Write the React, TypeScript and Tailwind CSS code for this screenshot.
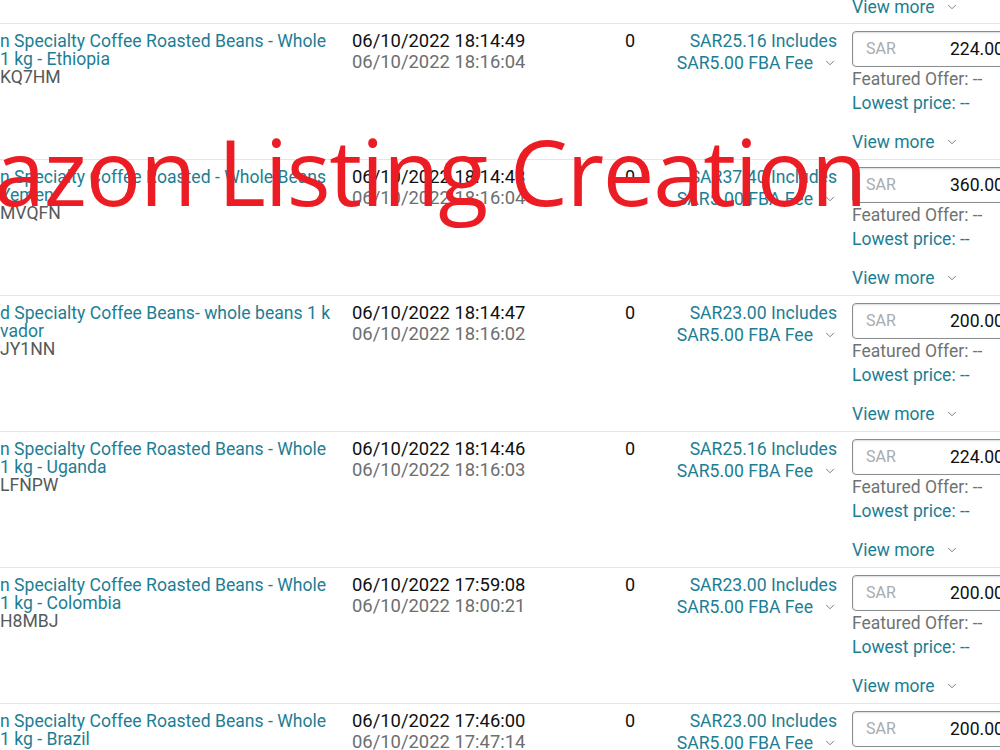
import { ChevronDown } from 'lucide-react'

type Listing = {
  title: string
  variant: string
  sku: string
  created: string
  updated: string
  fee: string
  price: string
}

const listings: Listing[] = [
  {
    title: 'n Specialty Coffee Roasted Beans - Whole',
    variant: '1 kg - Ethiopia',
    sku: 'KQ7HM',
    created: '06/10/2022 18:14:49',
    updated: '06/10/2022 18:16:04',
    fee: 'SAR25.16',
    price: '224.00',
  },
  {
    title: 'n Specialty Coffee Roasted - Whole Beans',
    variant: 'Yemen',
    sku: 'MVQFN',
    created: '06/10/2022 18:14:48',
    updated: '06/10/2022 18:16:04',
    fee: 'SAR37.40',
    price: '360.00',
  },
  {
    title: 'd Specialty Coffee Beans- whole beans 1 k',
    variant: 'vador',
    sku: 'JY1NN',
    created: '06/10/2022 18:14:47',
    updated: '06/10/2022 18:16:02',
    fee: 'SAR23.00',
    price: '200.00',
  },
  {
    title: 'n Specialty Coffee Roasted Beans - Whole',
    variant: '1 kg - Uganda',
    sku: 'LFNPW',
    created: '06/10/2022 18:14:46',
    updated: '06/10/2022 18:16:03',
    fee: 'SAR25.16',
    price: '224.00',
  },
  {
    title: 'n Specialty Coffee Roasted Beans - Whole',
    variant: '1 kg - Colombia',
    sku: 'H8MBJ',
    created: '06/10/2022 17:59:08',
    updated: '06/10/2022 18:00:21',
    fee: 'SAR23.00',
    price: '200.00',
  },
  {
    title: 'n Specialty Coffee Roasted Beans - Whole',
    variant: '1 kg - Brazil',
    sku: 'K2WLD',
    created: '06/10/2022 17:46:00',
    updated: '06/10/2022 17:47:14',
    fee: 'SAR23.00',
    price: '200.00',
  },
]

function Chevron() {
  return <ChevronDown className="ml-[10px] inline h-[14px] w-[14px] text-[#6f7373]" strokeWidth={1.6} />
}

function ViewMore() {
  return (
    <div className="flex h-[24px] items-center text-[17.5px] leading-[24px] text-[#1d7e93]">
      View more
      <Chevron />
    </div>
  )
}

function ListingRow({ item }: { item: Listing }) {
  return (
    <div className="flex h-[136px] shrink-0 border-t border-[#e3e6e6]">
      <div className="w-[352px] shrink-0 pt-[8px] text-[17.6px] leading-[18px]">
        <p className="whitespace-nowrap text-[#1d7e93]">{item.title}</p>
        <p className="text-[#1d7e93]">{item.variant}</p>
        <p className="text-[#565959]">{item.sku}</p>
      </div>

      <div className="w-[268px] shrink-0 pt-[6px] text-[18.4px] leading-[21px]">
        <p className="text-[#0f1111]">{item.created}</p>
        <p className="text-[#6b6f70]">{item.updated}</p>
      </div>

      <div className="w-[20px] shrink-0 pl-[5px] pt-[6px] text-[18px] leading-[21px] text-[#0f1111]">0</div>

      <div className="w-[197px] shrink-0 pt-[6px] text-right text-[17.6px] leading-[22px] text-[#1d7e93]">
        <p>{item.fee} Includes</p>
        <p className="flex items-center justify-end">
          SAR5.00 FBA Fee
          <Chevron />
        </p>
      </div>

      <div className="ml-[15px] w-[166px] shrink-0 pt-[7px]">
        <div className="flex h-[36px] items-center justify-between rounded-[4px] border border-[#888c8c] px-[13px] shadow-[inset_0_1px_2px_rgba(15,17,17,0.15)]">
          <span className="text-[16px] text-[#a9acac]">SAR</span>
          <span className="text-[17.6px] text-[#0f1111]">{item.price}</span>
        </div>
        <p className="text-[17.5px] leading-[24px] text-[#6f7373]">Featured Offer: --</p>
        <p className="text-[17.5px] leading-[24px] text-[#1d7e93]">Lowest price: --</p>
        <div className="mt-[15px]">
          <ViewMore />
        </div>
      </div>
    </div>
  )
}

export default function App() {
  return (
    <div className="relative h-[750px] w-[1000px] overflow-hidden bg-white font-['Roboto',sans-serif]">
      <div className="flex h-[23px] shrink-0 overflow-hidden pl-[852px]">
        <div className="-mt-[5px]">
          <ViewMore />
        </div>
      </div>

      {listings.map((item) => (
        <ListingRow key={item.sku} item={item} />
      ))}

      <div className="pointer-events-none absolute left-[-147px] top-[125px] whitespace-nowrap font-['Open_Sans',sans-serif] text-[92px] leading-none tracking-[-1.2px] text-[#ec1c24]">
        Amazon Listing Creation
      </div>
    </div>
  )
}
